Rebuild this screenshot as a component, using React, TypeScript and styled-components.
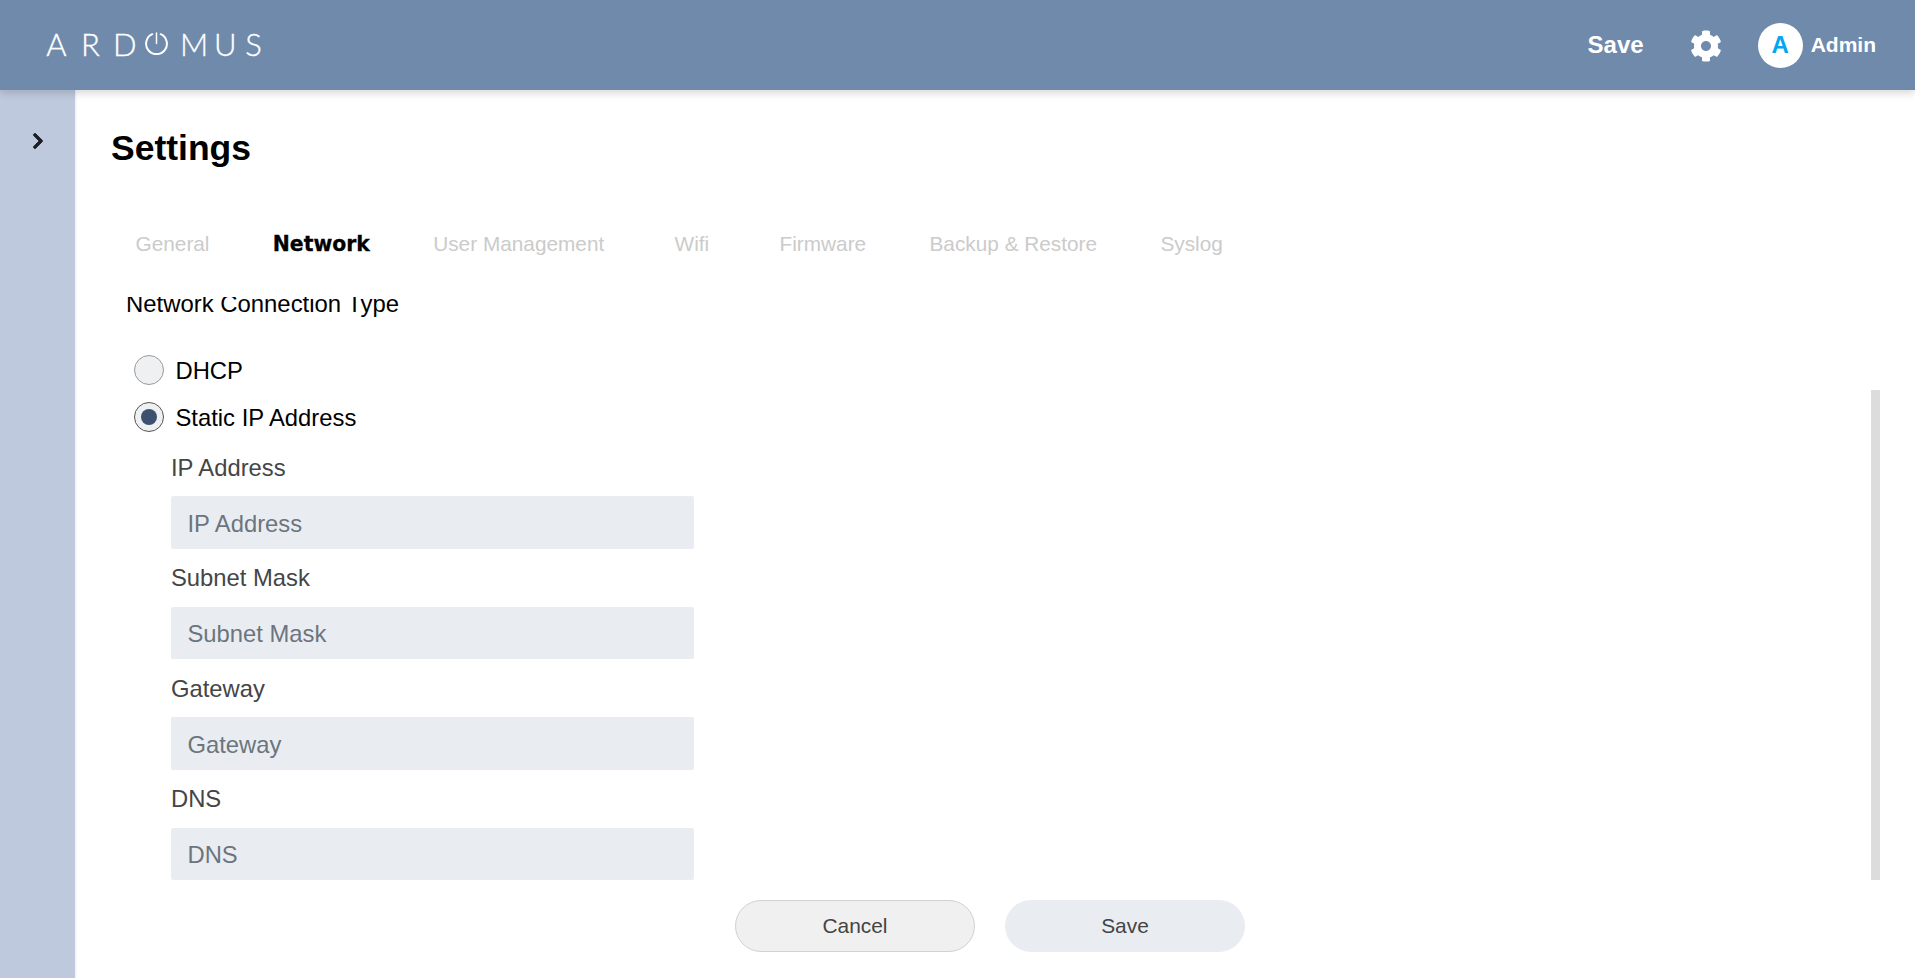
import React from "react";
import styled, { createGlobalStyle } from "styled-components";
import { FaCog, FaChevronRight } from "react-icons/fa";

const Global = createGlobalStyle`
  html, body { margin: 0; padding: 0; background: #fff; }
  * { box-sizing: border-box; }
  body { font-family: "Liberation Sans", Arial, sans-serif; }
`;

const Page = styled.div`
  width: 1915px;
  height: 978px;
  display: flex;
  flex-direction: column;
  overflow: hidden;
`;

const Header = styled.header`
  height: 90px;
  flex: none;
  display: flex;
  align-items: center;
  justify-content: space-between;
  padding: 0 39px 0 45px;
  background: #708aab;
  box-shadow: 0 3px 8px rgba(0, 0, 0, 0.16);
  position: relative;
  z-index: 2;
`;

const Logo = styled.div`
  display: flex;
  align-items: center;
  gap: 12px;
  height: 30px;
  color: #fff;
  margin-top: -3px;
`;

const LogoLetter = styled.span<{ $w: number }>`
  font-family: "Lato", "Liberation Sans", sans-serif;
  font-weight: 300;
  font-size: 31px;
  line-height: 30px;
  width: ${(p) => p.$w}px;
  text-align: center;
  -webkit-text-stroke: 0.35px #fff;
`;

const Actions = styled.div`
  display: flex;
  align-items: center;
`;

const HeaderSave = styled.span`
  color: #fff;
  font-weight: 700;
  font-size: 24px;
  margin-right: 46px;
`;

const GearWrap = styled.span`
  display: flex;
  color: #fff;
  margin-right: 36px;
  margin-top: 2px;
`;

const Avatar = styled.span`
  width: 45px;
  height: 45px;
  border-radius: 50%;
  background: #fff;
  color: #04a6ef;
  font-weight: 700;
  font-size: 24px;
  display: flex;
  align-items: center;
  justify-content: center;
  margin-right: 8px;
`;

const UserName = styled.span`
  color: #fff;
  font-weight: 700;
  font-size: 21px;
`;

const Body = styled.div`
  flex: 1;
  display: flex;
  min-height: 0;
`;

const Sidebar = styled.aside`
  width: 75px;
  flex: none;
  background: #bfc9dd;
  display: flex;
  justify-content: center;
  padding-top: 42px;
  color: #1d1f24;
  box-shadow: 1px 0 2px rgba(0, 0, 0, 0.08);
`;

const Main = styled.main`
  flex: 1;
  min-width: 0;
  padding-left: 36px;
  display: flex;
  flex-direction: column;
`;

const Title = styled.h1`
  margin: 37px 0 0;
  font-size: 35.5px;
  line-height: 42px;
  font-weight: 700;
  color: #000;
`;

const Tabs = styled.nav`
  display: flex;
  align-items: center;
  height: 30px;
  margin-top: 60px;
  padding-left: 24.5px;
  gap: 63.3px;
`;

const Tab = styled.span<{ $active?: boolean; $extra?: number }>`
  font-size: 20.8px;
  line-height: 30px;
  color: #cbcbcb;
  margin: 0 ${(p) => p.$extra ?? 0}px;
  ${(p) =>
    p.$active &&
    `
    font-family: "DejaVu Sans", sans-serif;
    font-weight: 700;
    font-size: 20.4px;
    color: #000;
    -webkit-text-stroke: 0.3px #000;
  `}
`;

const Panel = styled.section`
  position: relative;
  height: 587px;
  margin-top: 38px;
  padding-left: 15px;
  overflow: hidden;
  flex: none;
`;

const Thumb = styled.div`
  position: absolute;
  top: 93px;
  right: 35px;
  width: 9px;
  height: 490px;
  background: #dcdcdc;
`;

const SectionLabel = styled.div`
  margin-top: -8px;
  font-size: 23.9px;
  line-height: 30px;
  color: #000;
`;

const RadioGroup = styled.div`
  margin-top: 36px;
  padding-left: 8px;
  display: flex;
  flex-direction: column;
  gap: 16.5px;
`;

const RadioRow = styled.label`
  display: flex;
  align-items: center;
  gap: 11.5px;
  height: 30px;
  font-size: 23.8px;
  line-height: 32px;
  color: #000;
`;

const RadioText = styled.span`
  padding-top: 2px;
`;

const RadioDot = styled.span<{ $checked?: boolean }>`
  width: 30px;
  height: 30px;
  border-radius: 50%;
  border: 1px solid ${(p) => (p.$checked ? "#555" : "#9a9a9a")};
  background: #eef0f2;
  display: flex;
  align-items: center;
  justify-content: center;
  &::after {
    content: "";
    display: ${(p) => (p.$checked ? "block" : "none")};
    width: 16px;
    height: 16px;
    border-radius: 50%;
    background: #3c5170;
  }
`;

const Fields = styled.div`
  margin-top: 21px;
  margin-left: 45px;
  width: 523px;
  display: flex;
  flex-direction: column;
`;

const FieldLabel = styled.div`
  font-size: 23.8px;
  line-height: 30px;
  color: #454545;
`;

const Input = styled.div`
  height: 52.5px;
  margin: 13.5px 0 14.5px;
  padding: 3px 0 0 16.5px;
  display: flex;
  align-items: center;
  background: #e9edf2;
  border-radius: 2px;
  font-size: 23.8px;
  color: #6c757d;
`;

const Footer = styled.div`
  display: flex;
  gap: 30px;
  margin-top: 16px;
  padding-left: 624px;
`;

const Button = styled.button<{ $outlined?: boolean }>`
  width: 240px;
  height: 52px;
  border-radius: 26px;
  border: 1px solid ${(p) => (p.$outlined ? "#d2d2d2" : "#e9edf2")};
  background: ${(p) => (p.$outlined ? "#f0f0f0" : "#e9edf2")};
  font-family: inherit;
  font-size: 20.9px;
  color: #444;
  padding: 0;
`;

const TABS = ["General", "Network", "User Management", "Wifi", "Firmware", "Backup & Restore", "Syslog"];
const FIELDS = ["IP Address", "Subnet Mask", "Gateway", "DNS"];

const PowerO = () => (
  <svg width="23" height="23" viewBox="0 0 23 23" fill="none" stroke="#fff" strokeWidth="2" aria-hidden>
    <path d="M7.3 2.2a10.4 10.4 0 1 0 8.4 0" strokeLinecap="round" />
    <path d="M11.5 1v10.5" strokeLinecap="round" strokeWidth="1.5" />
  </svg>
);

export default function App() {
  return (
    <Page>
      <Global />
      <Header>
        <Logo>
          <LogoLetter $w={23}>A</LogoLetter>
          <LogoLetter $w={21}>R</LogoLetter>
          <LogoLetter $w={20}>D</LogoLetter>
          <PowerO />
          <LogoLetter $w={22}>M</LogoLetter>
          <LogoLetter $w={18}>U</LogoLetter>
          <LogoLetter $w={19}>S</LogoLetter>
        </Logo>
        <Actions>
          <HeaderSave>Save</HeaderSave>
          <GearWrap>
            <FaCog size={32} />
          </GearWrap>
          <Avatar>A</Avatar>
          <UserName>Admin</UserName>
        </Actions>
      </Header>
      <Body>
        <Sidebar>
          <FaChevronRight size={18} stroke="currentColor" strokeWidth={24} />
        </Sidebar>
        <Main>
          <Title>Settings</Title>
          <Tabs>
            {TABS.map((t) => (
              <Tab key={t} $active={t === "Network"} $extra={t === "Wifi" ? 7 : 0}>
                {t}
              </Tab>
            ))}
          </Tabs>
          <Panel>
            <SectionLabel>Network Connection Type</SectionLabel>
            <RadioGroup>
              <RadioRow>
                <RadioDot />
                <RadioText>DHCP</RadioText>
              </RadioRow>
              <RadioRow>
                <RadioDot $checked />
                <RadioText>Static IP Address</RadioText>
              </RadioRow>
            </RadioGroup>
            <Fields>
              {FIELDS.map((f) => (
                <React.Fragment key={f}>
                  <FieldLabel>{f}</FieldLabel>
                  <Input>{f}</Input>
                </React.Fragment>
              ))}
            </Fields>
            <Thumb />
          </Panel>
          <Footer>
            <Button $outlined>Cancel</Button>
            <Button>Save</Button>
          </Footer>
        </Main>
      </Body>
    </Page>
  );
}
